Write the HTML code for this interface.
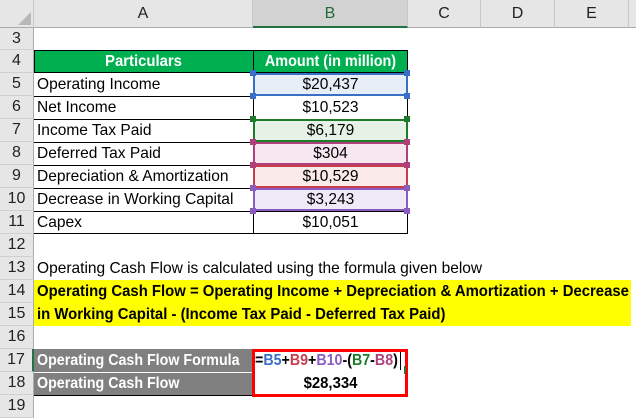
<!DOCTYPE html>
<html><head><style>
*{margin:0;padding:0;box-sizing:border-box}
body{width:636px;height:420px;overflow:hidden;background:#fff;font-family:"Liberation Sans",sans-serif;position:relative;color:#000}
div{position:absolute}
.hd{background:#e6e6e6;color:#222;font-size:16px;text-align:center;line-height:27px;top:0;height:28px;border-right:1px solid #c8c8c8;border-bottom:1px solid #ababab}
.rn{left:0;width:34px;background:#e6e6e6;border-right:1px solid #ababab;border-bottom:1px solid #d0d0d0;text-align:center;font-size:16px;color:#222;height:23px;line-height:22px}
.t{white-space:nowrap;font-size:16px;line-height:23px;transform:scaleX(.97);transform-origin:left center}
.c{white-space:nowrap;font-size:16px;line-height:23px;text-align:center;transform:scaleX(.97)}
.h{width:6px;height:6px}
</style></head><body>
<div class="hd" style="left:0;width:34px"></div>
<svg style="position:absolute;left:18px;top:12px" width="13" height="13"><polygon points="13,0 13,13 0,13" fill="#b8b8b8"/></svg>
<div class="hd" style="left:34px;width:219px">A</div>
<div class="hd" style="left:253px;width:155px;background:#d2d2d2;color:#1e6b3a;border-bottom:2px solid #217346">B</div>
<div class="hd" style="left:408px;width:73px">C</div>
<div class="hd" style="left:481px;width:74px">D</div>
<div class="hd" style="left:555px;width:74px">E</div>
<div class="hd" style="left:629px;width:7px;border-right:none"></div>

<div class="rn" style="top:28px;height:22px">3</div>
<div class="rn" style="top:50px">4</div>
<div class="rn" style="top:73px">5</div>
<div class="rn" style="top:96px">6</div>
<div class="rn" style="top:119px">7</div>
<div class="rn" style="top:142px">8</div>
<div class="rn" style="top:165px">9</div>
<div class="rn" style="top:188px">10</div>
<div class="rn" style="top:211px">11</div>
<div class="rn" style="top:234px">12</div>
<div class="rn" style="top:257px">13</div>
<div class="rn" style="top:280px">14</div>
<div class="rn" style="top:303px">15</div>
<div class="rn" style="top:326px">16</div>
<div class="rn" style="top:349px;border-right:2px solid #217346">17</div>
<div class="rn" style="top:372px">18</div>
<div class="rn" style="top:395px">19</div>

<div style="left:34px;top:50px;width:374px;height:23px;background:#00b050;border:1px solid #000"></div>
<div style="left:253px;top:50px;width:1px;height:184px;background:#000"></div>
<div style="left:407px;top:50px;width:1px;height:184px;background:#000"></div>
<div style="left:34px;top:233px;width:374px;height:1px;background:#000"></div>
<div style="left:34px;top:96px;width:219px;height:1px;background:#000"></div>
<div style="left:34px;top:119px;width:219px;height:1px;background:#000"></div>
<div style="left:34px;top:142px;width:219px;height:1px;background:#000"></div>
<div style="left:34px;top:165px;width:219px;height:1px;background:#000"></div>
<div style="left:34px;top:188px;width:219px;height:1px;background:#000"></div>
<div style="left:34px;top:211px;width:219px;height:1px;background:#000"></div>
<div style="left:253px;top:119px;width:155px;height:1px;background:#000"></div>
<div style="left:253px;top:211px;width:155px;height:1px;background:#000"></div>

<div style="left:253px;top:73px;width:155px;height:23px;background:#e8eef8;border:2px solid #3a6fc8"></div>
<div style="left:253px;top:119px;width:155px;height:23px;background:#e6f2e6;border:2px solid #1c7c2c"></div>
<div style="left:253px;top:142px;width:155px;height:23px;background:#f7e8ef;border:2px solid #b0407c"></div>
<div style="left:253px;top:165px;width:155px;height:23px;background:#fbeaea;border:2px solid #c83c4c"></div>
<div style="left:253px;top:188px;width:155px;height:23px;background:#efeaf7;border:2px solid #8a5cc0"></div>
<div class="h" style="left:250px;top:70px;background:#3a6fc8"></div><div class="h" style="left:404px;top:70px;background:#3a6fc8"></div>
<div class="h" style="left:250px;top:93px;background:#3a6fc8"></div><div class="h" style="left:404px;top:93px;background:#3a6fc8"></div>
<div class="h" style="left:250px;top:116px;background:#1c7c2c"></div><div class="h" style="left:404px;top:116px;background:#1c7c2c"></div>
<div class="h" style="left:250px;top:139px;background:#b0407c"></div><div class="h" style="left:404px;top:139px;background:#b0407c"></div>
<div class="h" style="left:250px;top:162px;background:#b0407c"></div><div class="h" style="left:404px;top:162px;background:#b0407c"></div>
<div class="h" style="left:250px;top:185px;background:#8a5cc0"></div><div class="h" style="left:404px;top:185px;background:#8a5cc0"></div>
<div class="h" style="left:250px;top:208px;background:#8a5cc0"></div><div class="h" style="left:404px;top:208px;background:#8a5cc0"></div>

<div class="c" style="left:34px;top:50px;width:219px;color:#fff;font-weight:bold;transform:scaleX(.93)">Particulars</div>
<div class="c" style="left:253px;top:50px;width:155px;color:#fff;font-weight:bold;transform:scaleX(.9)">Amount (in million)</div>
<div class="t" style="left:37px;top:73px">Operating Income</div>
<div class="t" style="left:37px;top:96px">Net Income</div>
<div class="t" style="left:37px;top:119px">Income Tax Paid</div>
<div class="t" style="left:37px;top:142px">Deferred Tax Paid</div>
<div class="t" style="left:37px;top:165px">Depreciation &amp; Amortization</div>
<div class="t" style="left:37px;top:188px">Decrease in Working Capital</div>
<div class="t" style="left:37px;top:211px">Capex</div>
<div class="c" style="left:253px;top:73px;width:155px">$20,437</div>
<div class="c" style="left:253px;top:96px;width:155px">$10,523</div>
<div class="c" style="left:253px;top:119px;width:155px">$6,179</div>
<div class="c" style="left:253px;top:142px;width:155px">$304</div>
<div class="c" style="left:253px;top:165px;width:155px">$10,529</div>
<div class="c" style="left:253px;top:188px;width:155px">$3,243</div>
<div class="c" style="left:253px;top:211px;width:155px">$10,051</div>

<div class="t" style="left:37px;top:257px">Operating Cash Flow is calculated using the formula given below</div>
<div style="left:34px;top:280px;width:597px;height:46px;background:#ffff00"></div>
<div class="t" style="left:37px;top:280px;font-weight:bold;transform:scaleX(.93)">Operating Cash Flow = Operating Income + Depreciation &amp; Amortization + Decrease</div>
<div class="t" style="left:37px;top:303px;font-weight:bold;transform:scaleX(.93)">in Working Capital - (Income Tax Paid - Deferred Tax Paid)</div>

<div style="left:34px;top:349px;width:219px;height:47px;background:#808080"></div>
<div style="left:34px;top:372px;width:219px;height:1px;background:#fff"></div>
<div style="left:34px;top:395px;width:374px;height:1px;background:#000"></div>
<div class="t" style="left:37px;top:349px;color:#fff;font-weight:bold;transform:scaleX(.89)">Operating Cash Flow Formula</div>
<div class="t" style="left:37px;top:372px;color:#fff;font-weight:bold;transform:scaleX(.89)">Operating Cash Flow</div>
<div style="left:252px;top:349px;width:156px;height:48px;border:3px solid #ff0000"></div>
<div class="t" style="left:255px;top:349px;font-weight:bold;transform:scaleX(.89)">=<span style="color:#3a6fc8">B5</span>+<span style="color:#c83c4c">B9</span>+<span style="color:#8a5cc0">B10</span>-(<span style="color:#1c7c2c">B7</span>-<span style="color:#b0407c">B8</span>)</div>
<div style="left:400px;top:352px;width:1px;height:18px;background:#000"></div>
<div style="left:404px;top:366px;width:2px;height:8px;background:#217346"></div>
<div class="c" style="left:253px;top:372px;width:155px;font-weight:bold;transform:scaleX(.93)">$28,334</div>
</body></html>
